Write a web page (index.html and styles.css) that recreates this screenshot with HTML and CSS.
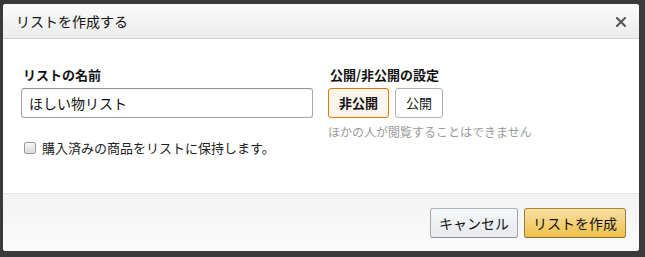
FILE: index.html
```html
<!DOCTYPE html>
<html lang="ja">
<head>
    <meta charset="UTF-8">
    <title>リストを作成する</title>
    <link rel="stylesheet" href="styles.css">
</head>
<body>
    <div class="dialog">
        <div class="dialog-header">
            <span class="dialog-title">リストを作成する</span>
            <svg class="close" width="10" height="10" viewBox="0 0 10 10">
                <path d="M1 1 L9 9 M9 1 L1 9" stroke="#555" stroke-width="2" stroke-linecap="square"/>
            </svg>
        </div>

        <div class="dialog-body">
            <div class="col-name">
                <div class="field-label">リストの名前</div>
                <div class="text-input">ほしい物リスト</div>
                <div class="check-row">
                    <span class="checkbox"></span>
                    <span>購入済みの商品をリストに保持します。</span>
                </div>
            </div>

            <div class="col-privacy">
                <div class="field-label">公開/非公開の設定</div>
                <div class="toggle-group">
                    <span class="toggle selected">非公開</span>
                    <span class="toggle">公開</span>
                </div>
                <div class="hint">ほかの人が閲覧することはできません</div>
            </div>
        </div>

        <div class="dialog-footer">
            <span class="btn btn-cancel">キャンセル</span>
            <span class="btn btn-primary">リストを作成</span>
        </div>
    </div>
</body>
</html>
```

FILE: styles.css
```css
body {
    margin: 0;
    padding: 4px 6px 6px 3px;
    background-color: #3a3a3a;
    font-family: "Noto Sans CJK JP", sans-serif;
    color: #111;
}

.dialog {
    width: 636px;
    height: 247px;
    background-color: #fff;
    border-radius: 3px;
    overflow: hidden;
    display: flex;
    flex-direction: column;
}

.dialog-header {
    height: 34px;
    border-bottom: 1px solid #cfcfcf;
    background: linear-gradient(#fbfbfb, #ececec);
    display: flex;
    align-items: center;
    justify-content: space-between;
    padding: 0 13px 0 13px;
}

.dialog-title {
    font-size: 14px;
    line-height: 20px;
}

.close {
    display: block;
    margin-top: 1px;
}

.dialog-body {
    flex: 1;
    display: flex;
    padding: 26px 18px 0 18px;
}

.col-name {
    width: 292px;
}

.col-privacy {
    margin-left: 15px;
}

.field-label {
    font-size: 13px;
    font-weight: bold;
    line-height: 19px;
    margin-bottom: 4px;
    padding-left: 2px;
}

.text-input {
    box-sizing: border-box;
    height: 30px;
    border: 1px solid #a6a6a6;
    border-top-color: #949494;
    border-radius: 3px;
    padding: 0 7px;
    font-size: 14px;
    line-height: 28px;
    box-shadow: inset 0 1px 0 rgba(0, 0, 0, 0.05);
}

.check-row {
    display: flex;
    align-items: center;
    margin-top: 20px;
    padding-left: 3px;
    font-size: 13px;
    line-height: 19px;
    color: #222;
}

.checkbox {
    box-sizing: border-box;
    width: 12px;
    height: 12px;
    border: 1px solid #9a9a9a;
    border-radius: 2px;
    background: linear-gradient(#f4f4f4, #dcdcdc);
    margin-right: 6px;
}

.toggle-group {
    display: flex;
    gap: 6px;
}

.toggle {
    box-sizing: border-box;
    height: 30px;
    padding: 0 10px;
    border: 1px solid #adb1b8;
    border-radius: 3px;
    background-color: #fff;
    font-size: 13px;
    line-height: 28px;
}

.toggle.selected {
    border-color: #e77600;
    background-color: #fcf5ee;
    font-weight: bold;
}

.hint {
    margin-top: 5px;
    font-size: 12px;
    line-height: 18px;
    color: #999;
}

.dialog-footer {
    height: 43px;
    border-top: 1px solid #e3e3e3;
    background: linear-gradient(#f3f3f3, #fbfbfb);
    display: flex;
    justify-content: flex-end;
    gap: 6px;
    padding: 14px 13px 0 0;
}

.btn {
    box-sizing: border-box;
    height: 30px;
    padding: 0 8px;
    border: 1px solid;
    border-radius: 3px;
    font-size: 14px;
    line-height: 28px;
}

.btn-cancel {
    border-color: #adb1b8 #a2a6ac #8d9096;
    background: linear-gradient(#f7f8fa, #e7e9ec);
    color: #111;
}

.btn-primary {
    border-color: #a88734 #9c7e31 #846a29;
    background: linear-gradient(#f7dfa5, #f0c14b);
    color: #111;
}
```
